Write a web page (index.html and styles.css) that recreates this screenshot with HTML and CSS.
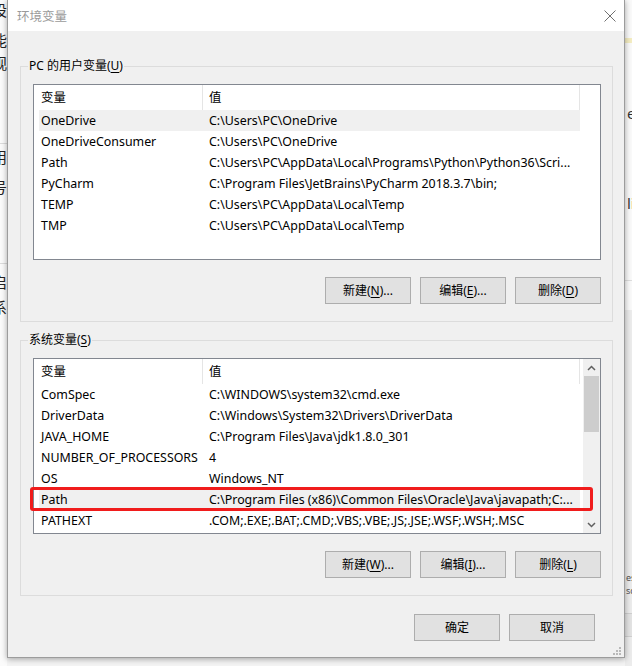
FILE: index.html
```html
<!DOCTYPE html>
<html lang="zh-CN">
<head>
<meta charset="utf-8">
<title>环境变量</title>
<link rel="stylesheet" href="styles.css">
</head>
<body>
<div class="desk">
  <div class="bg-left">
    <div class="bgch m0">设</div>
    <div class="bgch m10">能</div>
    <div class="bgch m3">观</div>
    <div class="bgline m70"></div>
    <div class="bgch m3">用</div>
    <div class="bgch m10">号</div>
    <div class="bgline m66"></div>
    <div class="bgch m8">启</div>
    <div class="bgch m5">系</div>
  </div>

  <div class="dialog">
    <div class="titlebar">
      <span class="title">环境变量</span>
      <span class="close">
        <svg width="12" height="12" viewBox="0 0 12 12"><path d="M0.5 0.5 L11.5 11.5 M11.5 0.5 L0.5 11.5" stroke="#6f6f6f" stroke-width="1" fill="none"/></svg>
      </span>
    </div>
    <div class="client">
      <section class="group">
        <div class="caption">PC 的用户变量(<u>U</u>)</div>
        <div class="listview">
          <div class="lv-main">
            <div class="lv-head"><div class="h1">变量</div><div class="h2">值</div></div>
            <div class="row sel"><div class="c1">OneDrive</div><div class="c2">C:\Users\PC\OneDrive</div></div>
            <div class="row"><div class="c1">OneDriveConsumer</div><div class="c2">C:\Users\PC\OneDrive</div></div>
            <div class="row"><div class="c1">Path</div><div class="c2">C:\Users\PC\AppData\Local\Programs\Python\Python36\Scri...</div></div>
            <div class="row"><div class="c1">PyCharm</div><div class="c2">C:\Program Files\JetBrains\PyCharm 2018.3.7\bin;</div></div>
            <div class="row"><div class="c1">TEMP</div><div class="c2">C:\Users\PC\AppData\Local\Temp</div></div>
            <div class="row"><div class="c1">TMP</div><div class="c2">C:\Users\PC\AppData\Local\Temp</div></div>
          </div>
        </div>
        <div class="btnrow">
          <button class="btn">新建(<u>N</u>)...</button>
          <button class="btn">编辑(<u>E</u>)...</button>
          <button class="btn">删除(<u>D</u>)</button>
        </div>
      </section>

      <section class="group g2">
        <div class="caption">系统变量(<u>S</u>)</div>
        <div class="listview">
          <div class="lv-main">
            <div class="lv-head"><div class="h1">变量</div><div class="h2">值</div></div>
            <div class="row"><div class="c1">ComSpec</div><div class="c2">C:\WINDOWS\system32\cmd.exe</div></div>
            <div class="row"><div class="c1">DriverData</div><div class="c2">C:\Windows\System32\Drivers\DriverData</div></div>
            <div class="row"><div class="c1">JAVA_HOME</div><div class="c2">C:\Program Files\Java\jdk1.8.0_301</div></div>
            <div class="row"><div class="c1">NUMBER_OF_PROCESSORS</div><div class="c2">4</div></div>
            <div class="row"><div class="c1">OS</div><div class="c2">Windows_NT</div></div>
            <div class="row sel marked"><div class="c1">Path</div><div class="c2">C:\Program Files (x86)\Common Files\Oracle\Java\javapath;C:...</div><span class="redbox"></span></div>
            <div class="row"><div class="c1">PATHEXT</div><div class="c2">.COM;.EXE;.BAT;.CMD;.VBS;.VBE;.JS;.JSE;.WSF;.WSH;.MSC</div></div>
          </div>
          <div class="vscroll">
            <div class="arrow"><svg width="9" height="6" viewBox="0 0 9 6"><path d="M1 5 L4.5 1.5 L8 5" stroke="#606060" stroke-width="1.5" fill="none"/></svg></div>
            <div class="track"><div class="thumb"></div></div>
            <div class="arrow"><svg width="9" height="6" viewBox="0 0 9 6"><path d="M1 1 L4.5 4.5 L8 1" stroke="#606060" stroke-width="1.5" fill="none"/></svg></div>
          </div>
        </div>
        <div class="btnrow">
          <button class="btn">新建(<u>W</u>)...</button>
          <button class="btn">编辑(<u>I</u>)...</button>
          <button class="btn">删除(<u>L</u>)</button>
        </div>
      </section>

      <div class="okrow">
        <button class="btn">确定</button>
        <button class="btn">取消</button>
      </div>
    </div>
    <svg class="grip" width="8" height="8" viewBox="0 0 8 8">
      <rect x="6" y="0" width="2" height="2" fill="#b8b8b8"/>
      <rect x="3" y="3" width="2" height="2" fill="#b8b8b8"/>
      <rect x="6" y="3" width="2" height="2" fill="#b8b8b8"/>
      <rect x="0" y="6" width="2" height="2" fill="#b8b8b8"/>
      <rect x="3" y="6" width="2" height="2" fill="#b8b8b8"/>
      <rect x="6" y="6" width="2" height="2" fill="#b8b8b8"/>
    </svg>
  </div>

  <div class="bg-right">
    <div class="rbar"></div>
    <div class="rtext r1">er</div>
    <div class="rtext r2">li</div>
    <div class="rline"></div>
    <div class="rpanel">
      <div class="rsmall s1">es</div>
      <div class="rsmall s2">sc</div>
      <div class="rbox"></div>
    </div>
  </div>
</div>
</body>
</html>
```
FILE: styles.css
```css
html, body {
  margin: 0;
  padding: 0;
}
body {
  width: 632px;
  height: 666px;
  overflow: hidden;
  font-family: "Noto Sans", "Noto Sans CJK SC", sans-serif;
  font-size: 12px;
  color: #000;
}
u { text-decoration: underline; text-underline-offset: 2px; }

.desk {
  display: grid;
  grid-template-columns: 7px 618px 7px;
  height: 666px;
  background: #f4f4f4;
}

/* background windows */
.bg-left {
  overflow: hidden;
  background: #fbfbfb;
  display: flex;
  flex-direction: column;
}
.bgch {
  height: 20px;
  line-height: 20px;
  font-family: "Noto Sans CJK SC", sans-serif;
  font-size: 15px;
  color: #222;
  margin-left: -8px;
  white-space: nowrap;
}
.bgline { height: 1px; background: #dcdcdc; flex: none; }
.m0 { margin-top: 0; }
.m3 { margin-top: 3px; }
.m5 { margin-top: 5px; }
.m8 { margin-top: 8px; }
.m10 { margin-top: 10px; }
.m66 { margin-top: 66px; }
.m70 { margin-top: 70px; }

.bg-right {
  overflow: hidden;
  background: #fafafa;
  display: flex;
  flex-direction: column;
}
.rbar { margin-top: 38px; height: 5px; background: #f4edc2; }
.rtext {
  height: 20px;
  line-height: 20px;
  font-size: 15px;
  color: #333;
  margin-left: 2px;
  white-space: nowrap;
}
.r1 { margin-top: 60px; }
.r2 { margin-top: 70px; }
.rline { margin-top: 67px; height: 1px; background: #dedede; }
.rpanel {
  margin-top: 29px;
  flex: 1;
  background: #ececec;
  display: flex;
  flex-direction: column;
}
.rsmall { font-size: 9px; line-height: 10px; color: #555; white-space: nowrap; margin-left: 1px; }
.s1 { margin-top: 263px; }
.s2 { margin-top: 3px; }
.rbox { margin-top: 17px; height: 22px; border-top: 1px solid #cfcfcf; border-bottom: 1px solid #cfcfcf; background: #e3e3e3; }

/* dialog */
.dialog {
  position: relative;
  z-index: 1;
  height: 658px;
  box-sizing: border-box;
  border: 1px solid #9c9c9c;
  border-top: none;
  background: #f0f0f0;
  box-shadow: 0 1px 6px rgba(0, 0, 0, 0.35);
  display: flex;
  flex-direction: column;
}
.titlebar {
  height: 31px;
  background: #fff;
  display: flex;
  align-items: center;
  justify-content: space-between;
  padding: 0 8px 0 9px;
  flex: none;
}
.title {
  font-family: "Noto Sans CJK SC", sans-serif;
  font-size: 12.5px;
  color: #9a9a9a;
  line-height: 16px;
  margin-top: 1px;
}
.close {
  width: 12px;
  height: 12px;
  display: block;
}
.close svg { display: block; }

.client {
  padding: 35px 11px 0 12px;
  display: flex;
  flex-direction: column;
}

.group {
  position: relative;
  border: 1px solid #dcdcdc;
  padding: 17px 11px 17px 12px;
}
.g2 { margin-top: 18px; }
.caption {
  position: absolute;
  left: 7px;
  top: -9px;
  padding: 0 1px;
  background: #f0f0f0;
  line-height: 16px;
  white-space: nowrap;
}

.listview {
  height: 176px;
  box-sizing: border-box;
  border: 1px solid #828790;
  background: #fff;
  display: flex;
}
.lv-main {
  flex: 1;
  display: flex;
  flex-direction: column;
  font-size: 12.4px;
}
.lv-head {
  display: flex;
  height: 25px;
  width: 546px;
  flex: none;
}
.h1 {
  width: 161px;
  padding-left: 7px;
  border-right: 1px solid #e5e5e5;
  line-height: 25px;
}
.h2 {
  width: 370px;
  padding-left: 6px;
  border-right: 1px solid #e5e5e5;
  line-height: 25px;
}
.row {
  position: relative;
  display: flex;
  height: 21px;
  width: 541px;
  margin-left: 5px;
  line-height: 21px;
  white-space: nowrap;
  flex: none;
}
.row.sel { background: #f0f0f0; }
.c1 {
  width: 162px;
  padding-left: 2px;
  overflow: hidden;
}
.c2 {
  flex: 1;
  padding-left: 6px;
  overflow: hidden;
}
.redbox {
  position: absolute;
  left: -9px;
  right: -13px;
  top: -2px;
  bottom: -1px;
  border: 3px solid #f01c1c;
  border-radius: 3px;
  pointer-events: none;
}

.vscroll {
  width: 17px;
  background: #f0f0f0;
  display: flex;
  flex-direction: column;
  flex: none;
}
.arrow {
  height: 17px;
  display: flex;
  align-items: center;
  justify-content: center;
  flex: none;
}
.arrow svg { display: block; }
.track {
  flex: 1;
  padding: 0 1px;
}
.thumb {
  height: 56px;
  background: #cdcdcd;
}

.btnrow {
  margin-top: 17px;
  display: flex;
  justify-content: flex-end;
  gap: 9px;
}
.btn {
  width: 86px;
  height: 27px;
  box-sizing: border-box;
  border: 1px solid #adadad;
  background: #e1e1e1;
  font-family: "Noto Sans", "Noto Sans CJK SC", sans-serif;
  font-size: 12px;
  color: #000;
  padding: 0;
  line-height: 25px;
  text-align: center;
}
.okrow {
  margin-top: 18px;
  padding-right: 18px;
  display: flex;
  justify-content: flex-end;
  gap: 9px;
}

.grip {
  position: absolute;
  right: 3px;
  bottom: 2px;
  display: block;
}
```
